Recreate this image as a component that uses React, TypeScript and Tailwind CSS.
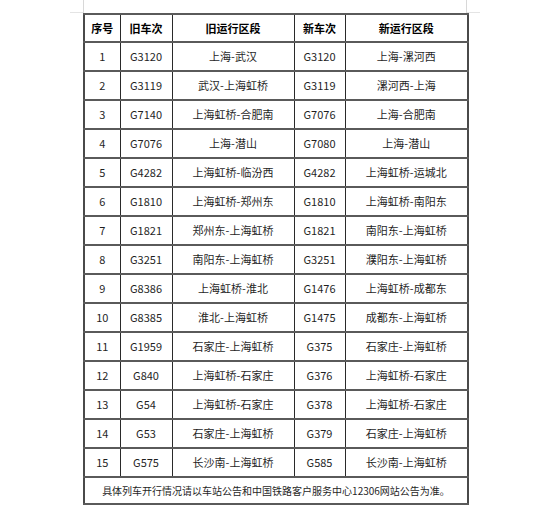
import React from 'react';

interface Row {
  no: number;
  oldTrain: string;
  oldRoute: string;
  newTrain: string;
  newRoute: string;
}

const ROWS: Row[] = [
  { no: 1, oldTrain: 'G3120', oldRoute: '上海-武汉', newTrain: 'G3120', newRoute: '上海-漯河西' },
  { no: 2, oldTrain: 'G3119', oldRoute: '武汉-上海虹桥', newTrain: 'G3119', newRoute: '漯河西-上海' },
  { no: 3, oldTrain: 'G7140', oldRoute: '上海虹桥-合肥南', newTrain: 'G7076', newRoute: '上海-合肥南' },
  { no: 4, oldTrain: 'G7076', oldRoute: '上海-潜山', newTrain: 'G7080', newRoute: '上海-潜山' },
  { no: 5, oldTrain: 'G4282', oldRoute: '上海虹桥-临汾西', newTrain: 'G4282', newRoute: '上海虹桥-运城北' },
  { no: 6, oldTrain: 'G1810', oldRoute: '上海虹桥-郑州东', newTrain: 'G1810', newRoute: '上海虹桥-南阳东' },
  { no: 7, oldTrain: 'G1821', oldRoute: '郑州东-上海虹桥', newTrain: 'G1821', newRoute: '南阳东-上海虹桥' },
  { no: 8, oldTrain: 'G3251', oldRoute: '南阳东-上海虹桥', newTrain: 'G3251', newRoute: '濮阳东-上海虹桥' },
  { no: 9, oldTrain: 'G8386', oldRoute: '上海虹桥-淮北', newTrain: 'G1476', newRoute: '上海虹桥-成都东' },
  { no: 10, oldTrain: 'G8385', oldRoute: '淮北-上海虹桥', newTrain: 'G1475', newRoute: '成都东-上海虹桥' },
  { no: 11, oldTrain: 'G1959', oldRoute: '石家庄-上海虹桥', newTrain: 'G375', newRoute: '石家庄-上海虹桥' },
  { no: 12, oldTrain: 'G840', oldRoute: '上海虹桥-石家庄', newTrain: 'G376', newRoute: '上海虹桥-石家庄' },
  { no: 13, oldTrain: 'G54', oldRoute: '上海虹桥-石家庄', newTrain: 'G378', newRoute: '上海虹桥-石家庄' },
  { no: 14, oldTrain: 'G53', oldRoute: '石家庄-上海虹桥', newTrain: 'G379', newRoute: '石家庄-上海虹桥' },
  { no: 15, oldTrain: 'G575', oldRoute: '长沙南-上海虹桥', newTrain: 'G585', newRoute: '长沙南-上海虹桥' },
];

const cell = 'border-x border-x-[#2a2a2a] border-y-2 border-y-[#5a5a5a] p-0 text-center align-middle';

export default function App() {
  return (
    <div className="w-[550px] h-[509px] bg-white overflow-hidden font-['Noto_Sans_CJK_SC','Noto_Sans',sans-serif] text-[#1f1f1f]">
      <div className="relative mx-auto w-[384px] pt-[13px]">
        {/* page corner marks */}
        <div className="absolute left-0 top-0 h-[13px] w-px bg-[#d8d8d8]" />
        <div className="absolute left-[-13px] top-[12px] h-px w-[13px] bg-[#e4e4e4]" />
        <div className="absolute right-0 top-0 h-[13px] w-px bg-[#d8d8d8]" />
        <div className="absolute right-[-13px] top-[12px] h-px w-[13px] bg-[#e4e4e4]" />

        <table className="w-[384px] table-fixed border-collapse border-2 border-[#4a4a4a] text-[11px] leading-none">
          <colgroup>
            <col className="w-[36px]" />
            <col className="w-[52px]" />
            <col className="w-[122px]" />
            <col className="w-[51px]" />
            <col className="w-[123px]" />
          </colgroup>
          <thead>
            <tr className="h-[28px] font-bold text-black">
              <th className={cell}>序号</th>
              <th className={cell}>旧车次</th>
              <th className={cell}>旧运行区段</th>
              <th className={cell}>新车次</th>
              <th className={cell}>新运行区段</th>
            </tr>
          </thead>
          <tbody>
            {ROWS.map(row => (
              <tr key={row.no} className="h-[29px]">
                <td className={cell}>{row.no}</td>
                <td className={cell}>{row.oldTrain}</td>
                <td className={cell}>{row.oldRoute}</td>
                <td className={cell}>{row.newTrain}</td>
                <td className={cell}>{row.newRoute}</td>
              </tr>
            ))}
            <tr className="h-[27px]">
              <td colSpan={5} className={`${cell} text-[10px]`}>
                具体列车开行情况请以车站公告和中国铁路客户服务中心12306网站公告为准。
              </td>
            </tr>
          </tbody>
        </table>
      </div>
    </div>
  );
}
